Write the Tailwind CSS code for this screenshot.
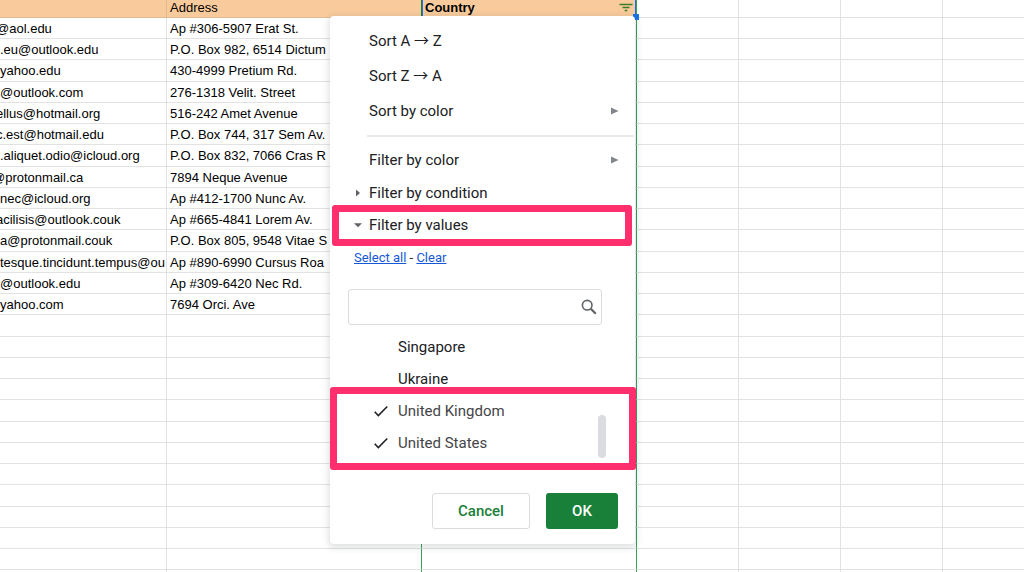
<!DOCTYPE html>
<html lang="en">
<head>
<meta charset="utf-8">
<meta name="viewport" content="width=device-width, initial-scale=1">
<title>Spreadsheet filter</title>
<script src="https://cdn.jsdelivr.net/npm/@tailwindcss/browser@4"></script>
</head>
<body class="bg-white">
<main class="relative h-screen overflow-hidden font-['Liberation_Sans',Arial,sans-serif] text-[13px] text-black">

  <table class="w-full table-fixed border-separate border-spacing-0 text-left leading-4 [&_td]:overflow-hidden [&_td]:whitespace-nowrap [&_td]:border-r [&_td]:border-b [&_td]:border-[#e2e2e2] [&_td]:p-0 [&_td]:pt-px [&_th]:p-0 [&_td:nth-child(2)]:pl-[3px] [&_td:nth-child(2)]:border-r-[#34a05a] [&_td:nth-child(3)]:border-r-[#34a05a] [&_td:nth-child(7)]:border-r-0">
    <colgroup>
      <col class="w-[167px]"><col class="w-[255px]"><col class="w-[215px]"><col class="w-[102px]"><col class="w-[102px]"><col class="w-[102px]"><col>
    </colgroup>
    <thead>
      <tr class="h-[18px] align-top">
        <th class="border-r border-b border-[#e3b98f] bg-[#f9cb9c]"></th>
        <th class="border-r border-b border-r-[#188038] border-b-[#e3b98f] bg-[#f9cb9c] font-normal"><div class="pl-[3px]">Address</div></th>
        <th class="border-r border-b border-r-[#34a05a] border-b-[#e3b98f] bg-[#f9cb9c]">
          <div class="flex h-[17px] justify-between border-x border-[#1a73e8] pr-[2px] pl-[2px]">
            <span>Country</span>
            <button type="button" aria-label="Filter Country" class="flex h-4 items-center">
              <svg class="h-4 w-[14px]" viewBox="0 0 14 16" fill="none" stroke="#3c7a2c" stroke-width="1.3"><path d="M.5 4.5h13M3.5 7.5h7M5.700 10.500h2.600"/></svg>
            </button>
          </div>
        </th>
        <th class="border-r border-b border-[#e2e2e2]"></th><th class="border-r border-b border-[#e2e2e2]"></th><th class="border-r border-b border-[#e2e2e2]"></th><th class="border-b border-[#e2e2e2]"></th>
      </tr>
    </thead>
    <tbody class="[&>tr]:h-[21px] [&>tr:nth-child(4n+3)]:h-[22px]">
      <tr><td class="-indent-1">@aol.edu</td><td>Ap #306-5907 Erat St.</td><td></td><td></td><td></td><td></td><td></td></tr>
      <tr><td>.eu@outlook.edu</td><td>P.O. Box 982, 6514 Dictum</td><td></td><td></td><td></td><td></td><td></td></tr>
      <tr><td>yahoo.edu</td><td>430-4999 Pretium Rd.</td><td></td><td></td><td></td><td></td><td></td></tr>
      <tr><td>@outlook.com</td><td>276-1318 Velit. Street</td><td></td><td></td><td></td><td></td><td></td></tr>
      <tr><td class="-indent-1">ellus@hotmail.org</td><td>516-242 Amet Avenue</td><td></td><td></td><td></td><td></td><td></td></tr>
      <tr><td class="-indent-1">c.est@hotmail.edu</td><td>P.O. Box 744, 317 Sem Av.</td><td></td><td></td><td></td><td></td><td></td></tr>
      <tr><td>.aliquet.odio@icloud.org</td><td>P.O. Box 832, 7066 Cras R</td><td></td><td></td><td></td><td></td><td></td></tr>
      <tr><td class="-indent-2">@protonmail.ca</td><td>7894 Neque Avenue</td><td></td><td></td><td></td><td></td><td></td></tr>
      <tr><td>nec@icloud.org</td><td>Ap #412-1700 Nunc Av.</td><td></td><td></td><td></td><td></td><td></td></tr>
      <tr><td class="-indent-1">acilisis@outlook.couk</td><td>Ap #665-4841 Lorem Av.</td><td></td><td></td><td></td><td></td><td></td></tr>
      <tr><td>a@protonmail.couk</td><td>P.O. Box 805, 9548 Vitae S</td><td></td><td></td><td></td><td></td><td></td></tr>
      <tr><td>tesque.tincidunt.tempus@ou</td><td>Ap #890-6990 Cursus Roa</td><td></td><td></td><td></td><td></td><td></td></tr>
      <tr><td>@outlook.edu</td><td>Ap #309-6420 Nec Rd.</td><td></td><td></td><td></td><td></td><td></td></tr>
      <tr><td>yahoo.com</td><td>7694 Orci. Ave</td><td></td><td></td><td></td><td></td><td></td></tr>
      <tr><td></td><td></td><td></td><td></td><td></td><td></td><td></td></tr>
      <tr><td></td><td></td><td></td><td></td><td></td><td></td><td></td></tr>
      <tr><td></td><td></td><td></td><td></td><td></td><td></td><td></td></tr>
      <tr><td></td><td></td><td></td><td></td><td></td><td></td><td></td></tr>
      <tr><td></td><td></td><td></td><td></td><td></td><td></td><td></td></tr>
      <tr><td></td><td></td><td></td><td></td><td></td><td></td><td></td></tr>
      <tr><td></td><td></td><td></td><td></td><td></td><td></td><td></td></tr>
      <tr><td></td><td></td><td></td><td></td><td></td><td></td><td></td></tr>
      <tr><td></td><td></td><td></td><td></td><td></td><td></td><td></td></tr>
      <tr><td></td><td></td><td></td><td></td><td></td><td></td><td></td></tr>
      <tr><td></td><td></td><td></td><td></td><td></td><td></td><td></td></tr>
      <tr><td></td><td></td><td></td><td></td><td></td><td></td><td></td></tr>
      <tr><td></td><td></td><td></td><td></td><td></td><td></td><td></td></tr>
    </tbody>
  </table>

  <!-- Selection handle -->
  <div class="absolute top-[14px] left-[633px] size-[6px] bg-[#1a73e8]"></div>

  <!-- Filter menu -->
  <section aria-label="Filter menu" class="absolute top-4 left-[330px] flex w-[305px] flex-col rounded-sm bg-white pt-[7px] pb-[15px] font-[Roboto,sans-serif] text-[15px] leading-5 text-[#202124] shadow-[0_2px_6px_2px_rgba(60,64,67,0.15)]">
    <button type="button" class="flex h-[35px] items-center pl-[39px]"><span>Sort A <span class="font-['Noto_Sans_CJK_JP',sans-serif]">→</span> Z</span></button>
    <button type="button" class="flex h-[35px] items-center pl-[39px]"><span>Sort Z <span class="font-['Noto_Sans_CJK_JP',sans-serif]">→</span> A</span></button>
    <button type="button" class="flex h-[35px] items-center justify-between pr-4 pl-[39px]">Sort by color
      <svg class="size-2" viewBox="0 0 8 8" fill="#80868b"><path d="M0 .5 7.500 4 0 7.500z"/></svg>
    </button>
    <hr class="my-[7px] mr-px ml-[37px] border-t-2 border-[#e8eaed]">
    <button type="button" class="flex h-8 items-center justify-between pr-4 pl-[39px]">Filter by color
      <svg class="size-2" viewBox="0 0 8 8" fill="#80868b"><path d="M0 .5 7.500 4 0 7.500z"/></svg>
    </button>
    <button type="button" class="flex h-[33px] items-center gap-[7px] pl-6">
      <svg class="size-2" viewBox="0 0 8 8" fill="#5f6368"><path d="M2 .5 6 4 2 7.500z"/></svg>Filter by condition
    </button>
    <div class="relative">
      <button type="button" class="flex h-8 w-full items-center gap-[7px] pl-6">
        <svg class="size-2" viewBox="0 0 8 8" fill="#5f6368"><path d="M0 2.300h8L4 6.300z"/></svg>Filter by values
      </button>
      <div class="pointer-events-none absolute -top-1 right-[3px] left-[2px] h-[41px] rounded-[3px] border-[7px] border-[#ff2e6c]"></div>
    </div>
    <div class="mt-[7px] pl-6 text-[13px] leading-5"><a href="#" class="text-[#1558d6] underline">Select all</a> - <a href="#" class="text-[#1558d6] underline">Clear</a></div>
    <label class="mt-[21px] mr-[33px] ml-[18px] flex h-9 items-center rounded-[3px] border border-[#dadce0] pr-1 pl-3">
      <input type="text" aria-label="Search values" class="min-w-0 flex-1 outline-none">
      <svg class="size-4" viewBox="0 0 16 16" fill="none" stroke="#5f6368"><circle cx="6.200" cy="6.200" r="4.800" stroke-width="1.600"/><path d="m9.800 9.800 5 5" stroke-width="2.200"/></svg>
    </label>
    <div class="relative mt-[6px] pb-[11px]">
      <label class="flex h-8 items-center gap-[10px] pl-11"><span class="relative size-[14px]"><input type="checkbox" class="peer absolute inset-0 appearance-none"><svg class="invisible size-[14px] peer-checked:visible" viewBox="0 0 14 14" fill="none" stroke="#202124" stroke-width="1.600"><path d="m.7 7.800 3.600 3.700 9-9"/></svg></span>Singapore</label>
      <label class="flex h-8 items-center gap-[10px] pl-11"><span class="relative size-[14px]"><input type="checkbox" class="peer absolute inset-0 appearance-none"><svg class="invisible size-[14px] peer-checked:visible" viewBox="0 0 14 14" fill="none" stroke="#202124" stroke-width="1.600"><path d="m.7 7.800 3.600 3.700 9-9"/></svg></span>Ukraine</label>
      <label class="flex h-8 items-center gap-[10px] pl-11 text-[#444548]"><span class="relative size-[14px]"><input type="checkbox" checked class="peer absolute inset-0 appearance-none"><svg class="invisible size-[14px] peer-checked:visible" viewBox="0 0 14 14" fill="none" stroke="#202124" stroke-width="1.600"><path d="m.7 7.800 3.600 3.700 9-9"/></svg></span>United Kingdom</label>
      <label class="flex h-8 items-center gap-[10px] pl-11 text-[#444548]"><span class="relative size-[14px]"><input type="checkbox" checked class="peer absolute inset-0 appearance-none"><svg class="invisible size-[14px] peer-checked:visible" viewBox="0 0 14 14" fill="none" stroke="#202124" stroke-width="1.600"><path d="m.7 7.800 3.600 3.700 9-9"/></svg></span>United States</label>
      <div class="absolute right-[29px] bottom-3 h-[43px] w-2 rounded-full bg-[#dadce0]"></div>
      <div class="pointer-events-none absolute -right-px bottom-0 left-0 h-[83px] rounded-[3px] border-[7px] border-[#ff2e6c]"></div>
    </div>
    <div class="mt-[23px] flex justify-end gap-4 pr-[17px] font-medium">
      <button type="button" class="h-9 w-[98px] rounded-[3px] border border-[#dadce0] text-[#188038]">Cancel</button>
      <button type="button" class="h-9 w-[72px] rounded-[3px] bg-[#188038] text-white">OK</button>
    </div>
  </section>
</main>
</body>
</html>
